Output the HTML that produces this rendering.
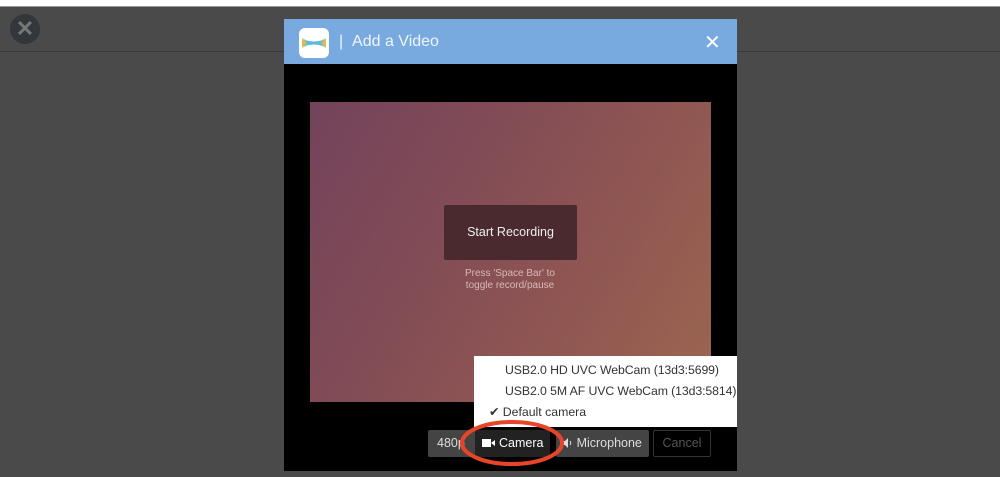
<!DOCTYPE html>
<html><head><meta charset="utf-8"><style>
body{margin:0;width:1000px;height:477px;overflow:hidden;background:#4a4a4a;font-family:"Liberation Sans",sans-serif;position:relative}
.a{position:absolute}
</style></head><body>
<div class="a" style="left:0;top:0;width:1000px;height:6px;background:#fff"></div>
<div class="a" style="left:0;top:6px;width:1000px;height:1px;background:#999"></div>
<div class="a" style="left:0;top:51px;width:1000px;height:1px;background:#3a3a3a"></div>
<div class="a" style="left:10px;top:14px;width:30px;height:30px;border-radius:50%;background:#33363a;color:#777;font-size:22px;font-weight:bold;text-align:center;line-height:30px">✕</div>
<div class="a" style="left:284px;top:19px;width:453px;height:45px;background:#78aadf"></div>
<div class="a" style="left:299px;top:28px;width:30px;height:30px;border-radius:6px;background:#fff;overflow:hidden">
<svg width="30" height="30"><path d="M3 10 Q15 17 27 10 L27 20 Q15 13 3 20Z" fill="#9bd36b" opacity=".8"/><path d="M3 12 Q15 15 27 12 L27 18 Q15 15 3 18Z" fill="#5bb9e8"/><path d="M3 11 L8 15 L3 19Z" fill="#f0b44a"/><path d="M27 11 L22 15 L27 19Z" fill="#f0b44a"/></svg></div>
<div class="a" style="left:339px;top:33px;color:#f0f5fb;font-size:16px">|&nbsp;&nbsp;Add a Video</div>
<div class="a" style="left:704px;top:30px;color:#fff;font-size:20px">✕</div>
<div class="a" style="left:284px;top:64px;width:453px;height:407px;background:#000"></div>
<div class="a" style="left:310px;top:102px;width:401px;height:300px;background:linear-gradient(120deg,#73435c 0%,#824c56 35%,#8f5652 65%,#9c6650 100%)"></div>
<div class="a" style="left:444px;top:205px;width:133px;height:55px;background:#4a2a2e;border-radius:2px;color:#eee;font-size:12.5px;text-align:center;line-height:55px">Start Recording</div>
<div class="a" style="left:430px;top:268px;width:160px;text-align:center;color:#d9b8b8;font-size:10px;line-height:12px">Press 'Space Bar' to<br>toggle record/pause</div>
<div class="a" style="left:428px;top:430px;width:50px;height:27px;background:#444;border-radius:2px;color:#ddd;font-size:12.5px;line-height:27px;padding-left:9px;box-sizing:border-box">480p</div>
<div class="a" style="left:475px;top:430px;width:75px;height:27px;background:#222;border-radius:2px;color:#fff;font-size:12.5px;line-height:27px;text-align:center"><svg width="14" height="10" style="vertical-align:-1px"><rect x="0" y="1" width="9" height="8" fill="#fff"/><path d="M9 5 L13 2 L13 8Z" fill="#fff"/></svg> Camera</div>
<div class="a" style="left:556px;top:430px;width:93px;height:27px;background:#444;border-radius:2px;color:#ddd;font-size:12.5px;line-height:27px;text-align:center"><svg width="10" height="10" style="vertical-align:-1px"><path d="M0 3 H2 L5 0 V10 L2 7 H0Z" fill="#ddd"/><path d="M7 3 Q8.5 5 7 7" stroke="#ddd" fill="none"/></svg> Microphone</div>
<div class="a" style="left:653px;top:430px;width:58px;height:27px;border:1px solid #333;box-sizing:border-box;border-radius:2px;color:#555;font-size:12.5px;line-height:25px;text-align:center">Cancel</div>
<div class="a" style="left:474px;top:356px;width:263px;height:71px;background:#fff;color:#333;font-size:12.3px;overflow:hidden">
<div class="a" style="left:31px;top:7px;white-space:nowrap;letter-spacing:-0.1px">USB2.0 HD UVC WebCam (13d3:5699)</div>
<div class="a" style="left:31px;top:28px;white-space:nowrap;letter-spacing:-0.1px">USB2.0 5M AF UVC WebCam (13d3:5814)</div>
<div class="a" style="left:15px;top:49px;white-space:nowrap">✔ Default camera</div></div>
<svg class="a" style="left:0;top:0" width="1000" height="477"><ellipse cx="512" cy="443" rx="50" ry="21" fill="none" stroke="#e8442a" stroke-width="4"/></svg>
</body></html>
